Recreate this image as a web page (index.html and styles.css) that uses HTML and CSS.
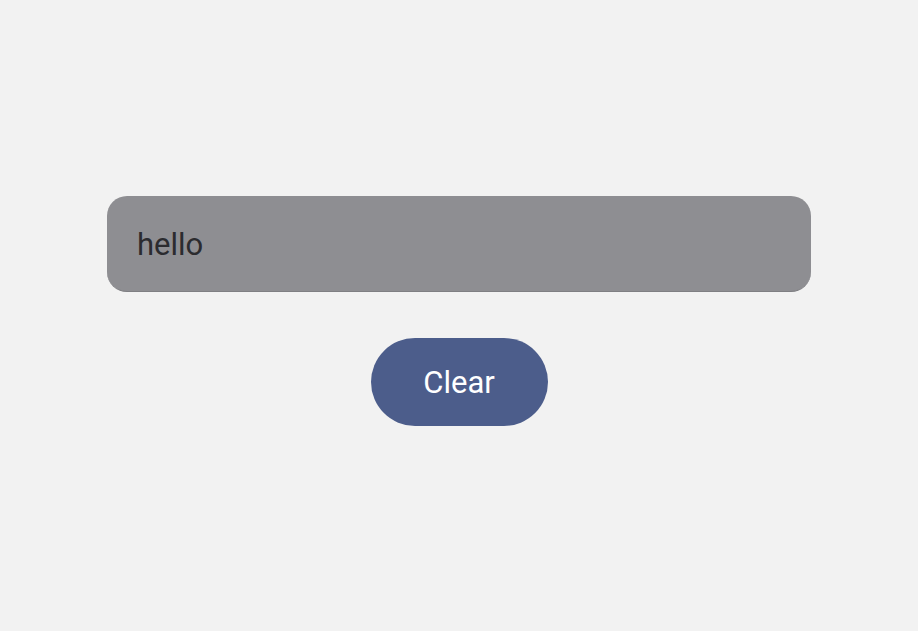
FILE: index.html
```html
<!DOCTYPE html>
<html lang="en">
<head>
    <meta charset="UTF-8">
    <meta name="viewport" content="width=device-width, initial-scale=1.0">
    <title>Clear</title>
    <link rel="stylesheet" href="styles.css">
</head>
<body>
    <div class="container">
        <div class="field">hello</div>
        <button class="clear-button">Clear</button>
    </div>
</body>
</html>
```

FILE: styles.css
```css
body {
    font-family: Roboto, "Noto Sans", sans-serif;
    background-color: #f2f2f2;
    margin: 0;
    height: 100vh;
}

.container {
    display: flex;
    flex-direction: column;
    align-items: center;
    padding-top: 196px;
    gap: 46px;
}

.field {
    box-sizing: border-box;
    width: 704px;
    height: 96px;
    padding-left: 30px;
    padding-top: 2px;
    display: flex;
    align-items: center;
    background-color: #8e8e92;
    border-bottom: 1px solid #7f7f83;
    border-radius: 20px;
    color: #2b2b2f;
    font-size: 31px;
}

.clear-button {
    width: 177px;
    height: 88px;
    border: none;
    border-radius: 44px;
    background-color: #4c5d8b;
    color: #ffffff;
    font-family: Roboto, "Noto Sans", sans-serif;
    font-size: 31px;
    cursor: pointer;
}
```
